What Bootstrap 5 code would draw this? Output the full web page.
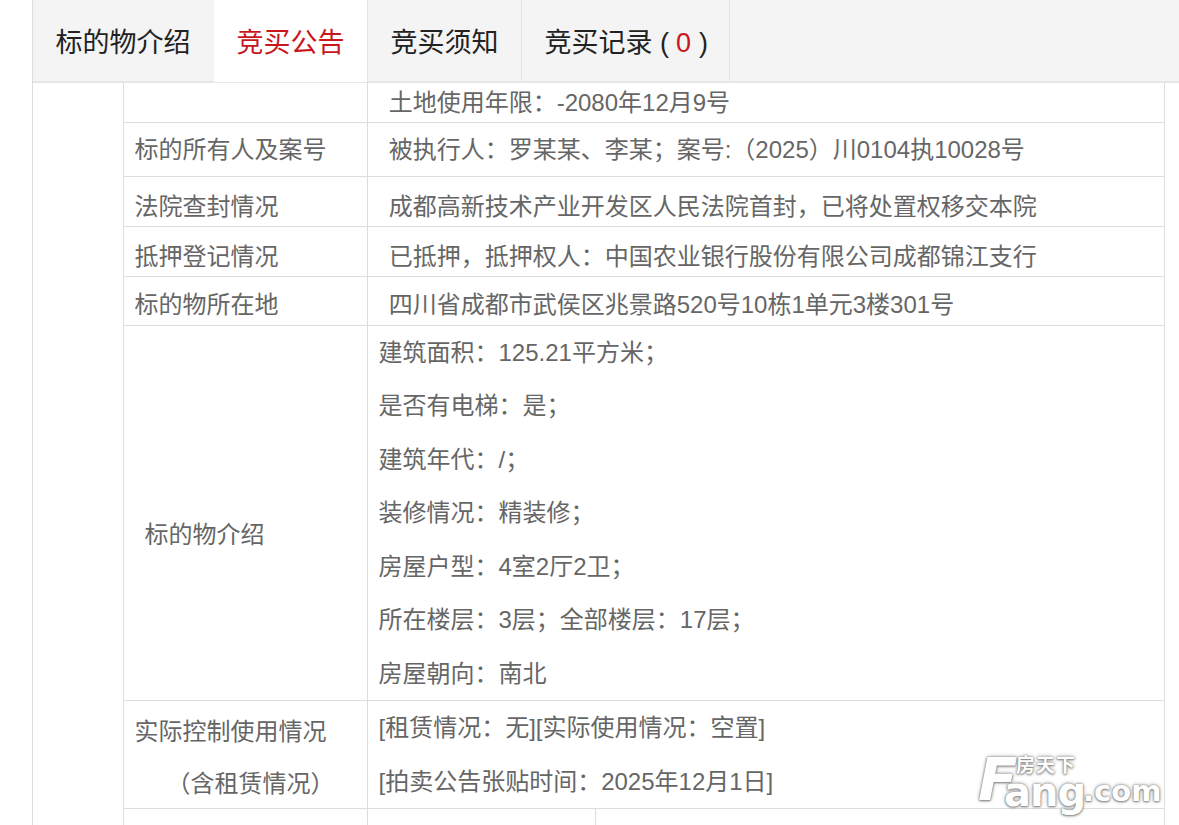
<!DOCTYPE html>
<html lang="zh"><head><meta charset="utf-8"><title>竞买公告</title>
<link rel="stylesheet" href="https://cdn.jsdelivr.net/npm/bootstrap@5.3.0/dist/css/bootstrap.min.css">
<style>
html,body{height:825px;overflow:hidden;background:#fff}
body{font-family:"Liberation Sans","Noto Sans CJK SC",sans-serif;color:#666;position:relative}
.shell{margin-left:32px;border-left:1px solid #ddd;height:825px}
.tabbar{height:83px;background:#f4f4f4;border-bottom:2px solid #e6e6e6}
.tabitem{height:82px;font-size:27px;line-height:87px;color:#222;border-right:1px solid #e4e4e4;white-space:nowrap;padding-left:22.5px}
.tabitem.first{width:181px;border-right:0}
.tabitem.on{width:154px;background:#fff;color:#c8171c}
.tabitem.third{width:154px}
.tabitem.fourth{width:208px}
.tabitem b{font-weight:400;color:#c8171c;margin:0 8px 0 7px}
.grid-wrap{margin-left:90px;width:1042px;margin-top:-1px}
.info{width:1042px;table-layout:fixed;border-collapse:collapse;font-size:24px;color:#666;margin:0}
.info td{border:1px solid #ddd;padding:0 0 0 10.5px;vertical-align:middle;white-space:nowrap;line-height:36px}
.info td.val{padding-left:20.7px}
.info p{margin:0;height:53.5px;line-height:53.5px}
.info td.top-clip{border-top:0}
.info td.lowered{padding-top:12px}
.info td.lowered-s{padding-top:9px}
.info td.nudge{padding-top:2px}
.info td.intro-label{padding-left:20.5px;padding-top:44px}
.info td.ctrl-label{vertical-align:top}
.info td.ctrl-label .ctrl-a{height:62px;line-height:62px}
.info td.ctrl-label .ctrl-b{height:42px;line-height:42px;padding-left:8px}
.c1{width:244px}
.c2{width:228px}
.mark-logo{position:absolute;left:980px;top:752px;width:190px;height:66px;color:#fff;pointer-events:none;text-shadow:0 0 2px #777,0 0 4px #aaa,0 1px 2px #888;font-family:"DejaVu Sans",sans-serif;font-weight:700}
.mark-logo span{position:absolute;white-space:nowrap}
.mark-logo .logo-f{left:-2px;top:5px;font-size:58px;line-height:46px;height:46px;font-style:italic;letter-spacing:-14px}
.mark-logo .logo-ang{left:24px;top:22px;font-size:40px;line-height:36px;height:36px;letter-spacing:-1px}
.mark-logo .logo-com{left:103px;top:27px;font-size:29px;line-height:24px;height:24px}
.mark-logo .logo-cn{left:36px;top:3px;font:700 19px/17px "Noto Sans CJK SC",sans-serif;height:17px;letter-spacing:1px}
</style></head>
<body>
<div class="shell">
  <div class="tabbar d-flex">
    <div class="tabitem first">标的物介绍</div>
    <div class="tabitem on">竞买公告</div>
    <div class="tabitem third">竞买须知</div>
    <div class="tabitem fourth">竞买记录 (<b>0</b>)</div>
  </div>
  <div class="grid-wrap">
    <table class="info">
      <colgroup><col class="c1"><col class="c2"><col></colgroup>
      <tr style="height:40px"><td class="top-clip"></td><td class="val top-clip nudge" colspan="2">土地使用年限：-2080年12月9号</td></tr>
      <tr style="height:54px"><td class="nudge">标的所有人及案号</td><td class="val nudge" colspan="2">被执行人：罗某某、李某；案号:（2025）川0104执10028号</td></tr>
      <tr style="height:50px"><td class="lowered">法院查封情况</td><td class="val lowered" colspan="2">成都高新技术产业开发区人民法院首封，已将处置权移交本院</td></tr>
      <tr style="height:50px"><td class="lowered">抵押登记情况</td><td class="val lowered" colspan="2">已抵押，抵押权人：中国农业银行股份有限公司成都锦江支行</td></tr>
      <tr style="height:49px"><td class="lowered-s">标的物所在地</td><td class="val lowered-s" colspan="2">四川省成都市武侯区兆景路520号10栋1单元3楼301号</td></tr>
      <tr style="height:375px"><td class="intro-label">标的物介绍</td><td colspan="2">
        <p>建筑面积：125.21平方米；</p><p>是否有电梯：是；</p><p>建筑年代：/；</p><p>装修情况：精装修；</p><p>房屋户型：4室2厅2卫；</p><p>所在楼层：3层；全部楼层：17层；</p><p>房屋朝向：南北</p>
      </td></tr>
      <tr style="height:108px"><td class="ctrl-label"><p class="ctrl-a">实际控制使用情况</p><p class="ctrl-b">&emsp;（含租赁情况）</p></td><td colspan="2"><p>[租赁情况：无][实际使用情况：空置]</p><p>[拍卖公告张贴时间：2025年12月1日]</p></td></tr>
      <tr style="height:40px"><td></td><td></td><td></td></tr>
    </table>
  </div>
</div>
<div class="mark-logo"><span class="logo-f">F</span><span class="logo-cn">房天下</span><span class="logo-ang">ang</span><span class="logo-com">.com</span></div>
<script src="https://cdn.jsdelivr.net/npm/bootstrap@5.3.0/dist/js/bootstrap.bundle.min.js"></script>
</body></html>
